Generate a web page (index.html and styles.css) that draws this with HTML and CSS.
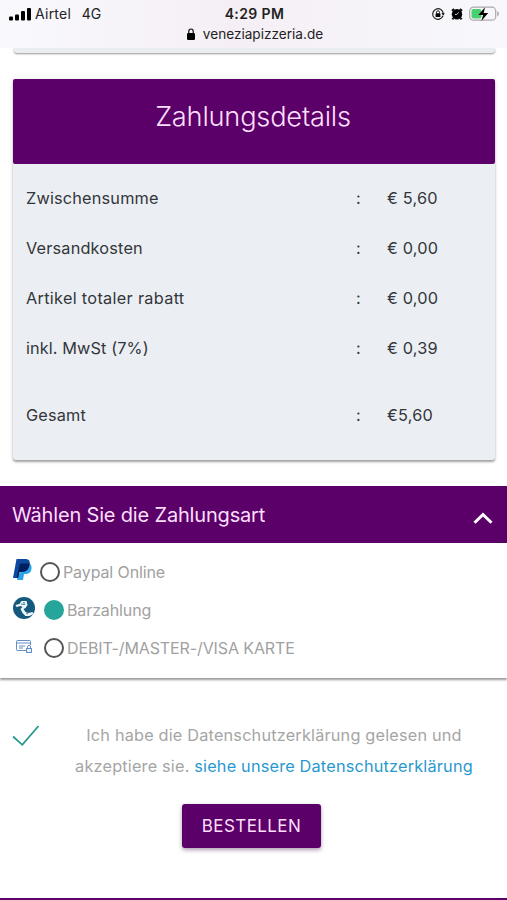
FILE: index.html
```html
<!DOCTYPE html>
<html lang="de">
<head>
<meta charset="utf-8">
<meta name="viewport" content="width=device-width, initial-scale=1">
<title>Venezia Pizzeria</title>
<link rel="stylesheet" href="styles.css">
</head>
<body>
<header class="browser">
  <div class="status">
    <div class="carrier">
      <svg width="22" height="14" viewBox="0 0 22 14"><rect x="0" y="9.5" width="4" height="4" rx="1"/><rect x="6" y="7.5" width="4" height="6" rx="1"/><rect x="12" y="4" width="4" height="9.5" rx="1"/><rect x="18" y="1" width="4" height="12.5" rx="1"/></svg>
      <span class="airtel">Airtel</span><span class="network">4G</span>
    </div>
    <span class="clock">4:29 PM</span>
    <div class="indicators">
      <svg width="14" height="14" viewBox="0 0 14 14"><path d="M12 8.8A5.3 5.3 0 1 1 12.3 7" fill="none" stroke="#222" stroke-width="1.2"/><path d="M10.4 6.3h3.4l-1.6 2.2z"/><rect x="4.6" y="6.3" width="4.8" height="3.8" rx=".6"/><path d="M5.5 6.5V5.3a1.5 1.5 0 0 1 3 0v1.2" fill="none" stroke="#222"/></svg>
      <svg class="alarm" width="12" height="14" viewBox="0 0 12 14"><circle cx="6" cy="7.2" r="5.2"/><path d="M1 3.8 3.2 2M11 3.8 8.8 2M2.3 11 1.5 12.3M9.7 11l.8 1.3" stroke="#111" stroke-width="2.2"/><path d="M7.6 5.3 5.8 7.5H4" fill="none" stroke="#ddd" stroke-width=".9"/></svg>
      <svg class="battery" width="31" height="16" viewBox="0 0 31 16"><rect x=".7" y="1.2" width="26" height="13" rx="3.8" fill="none" stroke="#aaa" stroke-width="1.2"/><rect x="2.5" y="3" width="10" height="9.5" rx="2" fill="#48cf70"/><path d="M28.3 5v5.5c2.2-1 2.2-4.5 0-5.5z" fill="#aaa"/><path d="m16 1.2-6.6 7.7h4.7l-1.7 6.1 6.8-8.1h-4.5z"/></svg>
    </div>
  </div>
  <div class="address">
    <svg width="8" height="12" viewBox="0 0 8 12"><rect y="5" width="8" height="7" rx="1.2"/><path d="M1.8 5.5V3.2a2.2 2.2 0 0 1 4.4 0v2.3" fill="none" stroke="#111" stroke-width="1.2"/></svg>
    <span>veneziapizzeria.de</span>
  </div>
</header>
<main>
  <div class="card-end"></div>
  <section class="card">
    <h1><span>Zahlungsdetails</span></h1>
    <dl>
      <div class="row"><dt>Zwischensumme</dt><dd>:</dd><dd>€ 5,60</dd></div>
      <div class="row"><dt>Versandkosten</dt><dd>:</dd><dd>€ 0,00</dd></div>
      <div class="row"><dt class="discount">Artikel totaler rabatt</dt><dd>:</dd><dd>€ 0,00</dd></div>
      <div class="row"><dt class="vat">inkl. MwSt (7%)</dt><dd>:</dd><dd>€ 0,39</dd></div>
      <div class="row total"><dt>Gesamt</dt><dd>:</dd><dd>€5,60</dd></div>
    </dl>
  </section>
  <section class="payment">
    <h2><span>Wählen Sie die Zahlungsart</span>
      <svg width="20" height="14" viewBox="0 0 20 14"><path d="m1.5 11.8 8.5-8.3 8.5 8.3" fill="none" stroke="#fff" stroke-width="3"/></svg>
    </h2>
    <div class="options">
      <label class="option">
        <svg class="paypal" width="19" height="22" viewBox="0 0 19 22"><path d="M16 4c3 2 3 5 2 8-1 2-3 3-5 3h-2l-1 6H4l1-5z" fill="#2aa5e6"/><path d="M3.5 0H12c4 0 5.500 2 4.500 6-1 5-4 7-8 7H6.500l-1.500 6H0z" fill="#0d4a9e"/><path d="M7 4.500h9.500c0 5-3 8.500-8 8.500H6.500l-1.500 6H3.500z" fill="#001f61"/></svg>
        <span class="radio"></span><span>Paypal Online</span>
      </label>
      <label class="option">
        <svg class="cash" width="22" height="22" viewBox="0 0 22 22"><circle cx="11" cy="11" r="11" fill="#155a7e"/><path d="m2.500 8 4-1 2-3h5l1 4-2 3-2 1 2 3 3 1 4-1 1 2-4 2h-4l-3-3-2-4 2-2-2-1-4 1z" fill="#edf7f9"/><path d="m8 7 4 .5M10 5.500l2 .5M13 16l2 1" stroke="#2c829b" fill="none"/></svg>
        <span class="radio selected"></span><span>Barzahlung</span>
      </label>
      <label class="option">
        <svg class="credit" width="16" height="13" viewBox="0 0 16 13"><path d="M10 10.500H1.200a.7.7 0 0 1-.7-.7V1.300c0-.4.3-.8.7-.8h12.600c.4 0 .7.4.7.8V5M.5 3h14M3 6h6M3 8h4" fill="none" stroke="#6590c4"/><rect x="10.500" y="8.500" width="5" height="4" fill="#e7effa" stroke="#6590c4"/><path d="M11.500 8V6.800a1.500 1.500 0 0 1 3 0V8" fill="none" stroke="#6590c4"/></svg>
        <span class="radio"></span><span>DEBIT-/MASTER-/VISA KARTE</span>
      </label>
    </div>
  </section>
  <section class="consent">
    <svg width="29" height="22" viewBox="0 0 29 22"><path d="m1 11.500 9.300 8.300L26.500 1" fill="none" stroke="#26988c" stroke-width="1.8"/></svg>
    <p>Ich habe die Datenschutzerklärung gelesen und<br>akzeptiere sie. <a>siehe unsere Datenschutzerklärung</a></p>
  </section>
  <button type="button">BESTELLEN</button>
</main>
<footer></footer>
</body>
</html>
```
FILE: styles.css
```css
* { box-sizing: border-box; }
body { margin: 0; height: 900px; overflow: hidden; display: flex; flex-direction: column; background: #fff; color: #33363a; font-family: Inter, "Liberation Sans", sans-serif; font-size: 16px; }
svg { display: block; flex: none; }
h1, h2, p, dl, dd { margin: 0; }
.browser { height: 48px; flex: none; background: linear-gradient(90deg, #f9f9fd, #f5eff5 46%, #f8f8fc); color: #222; }
.status { height: 26px; padding: 1px 7px 0 9px; display: grid; grid-template-columns: 1fr auto 1fr; align-items: center; font-size: 14px; }
.carrier, .indicators, .address { display: flex; align-items: center; }
.airtel { margin-left: 4px; letter-spacing: .25px; }
.network { margin-left: 10.5px; letter-spacing: .2px; }
.clock { font-size: 14px; font-weight: 600; letter-spacing: .4px; }
.indicators { justify-content: flex-end; }
.alarm { margin-left: 6px; }
.battery { margin-left: 6px; }
.address { height: 15px; justify-content: center; gap: 8px; padding-left: 3px; font-size: 13.6px; }
main { flex: 1; display: flex; flex-direction: column; }
.card-end { height: 5px; margin: 0 12px 26px 14px; flex: none; border-radius: 0 0 3px 3px; background: #eaeef1; box-shadow: 0 1px 2px #999; clip-path: inset(0 -4px -4px); }
.card { height: 381px; flex: none; margin: 0 12px 0 13px; border-radius: 3px; background: #ebeff3; box-shadow: 0 2px 2px rgba(0,0,0,.3), 0 1px 5px rgba(0,0,0,.12); }
h1 { height: 85px; padding: 0 2px 10px 0; display: flex; align-items: center; justify-content: center; background: #5b0068; color: #fbdffc; border-radius: 2px; font-size: 27.2px; font-weight: 300; letter-spacing: -.2px; }
dl { padding: 9px 13px 0; font-size: 16.3px; letter-spacing: .18px; }
.row { height: 50px; display: grid; grid-template-columns: 330px 31px 1fr; align-items: center; }
.discount { letter-spacing: .3px; }
.vat { letter-spacing: .1px; }
.total { margin-top: 17px; }
.payment { height: 192px; flex: none; margin-top: 26px; background: #fff; box-shadow: 0 2px 2px rgba(0,0,0,.4); }
h2 { height: 57px; padding: 0 14px 0 12px; background: #5b0068; color: #fbdffc; display: flex; align-items: center; justify-content: space-between; font-size: 20px; font-weight: 400; letter-spacing: -.17px; }
h2 svg { margin-top: 7px; }
.options { padding: 10px 12px; color: #a1a1a1; letter-spacing: -.11px; }
.option { height: 38px; display: flex; align-items: center; }
.radio { width: 20px; height: 20px; flex: none; margin: -1px 3px 0 8px; border: 2.5px solid #555; border-radius: 50%; }
.selected { border-color: #26a69a; background: #26a69a; }
.paypal { margin: -4px 0 0 1px; }
.cash { margin: -4px -1px 0 1px; }
.cash + .radio, .credit + .radio { margin-left: 10px; }
.credit { margin: -4px 2px 0 4px; }
.consent { margin-top: 42px; padding-left: 12px; display: flex; align-items: flex-start; color: #a5a5a5; }
.consent svg { margin-top: 5px; }
.consent p { width: 470px; text-align: center; line-height: 31px; white-space: nowrap; font-size: 16.3px; letter-spacing: .18px; }
a { color: #2998cf; }
button { align-self: center; width: 139px; height: 44px; margin: 22px 4px 0 0; padding: 0; border: 0; border-radius: 3px; background: #5b0068; box-shadow: 0 2px 4px rgba(50,0,60,.4); color: #fbdffc; font: 400 17px Inter, "Liberation Sans", sans-serif; letter-spacing: .4px; }
footer { height: 2px; flex: none; background: #5b0068; }
```
